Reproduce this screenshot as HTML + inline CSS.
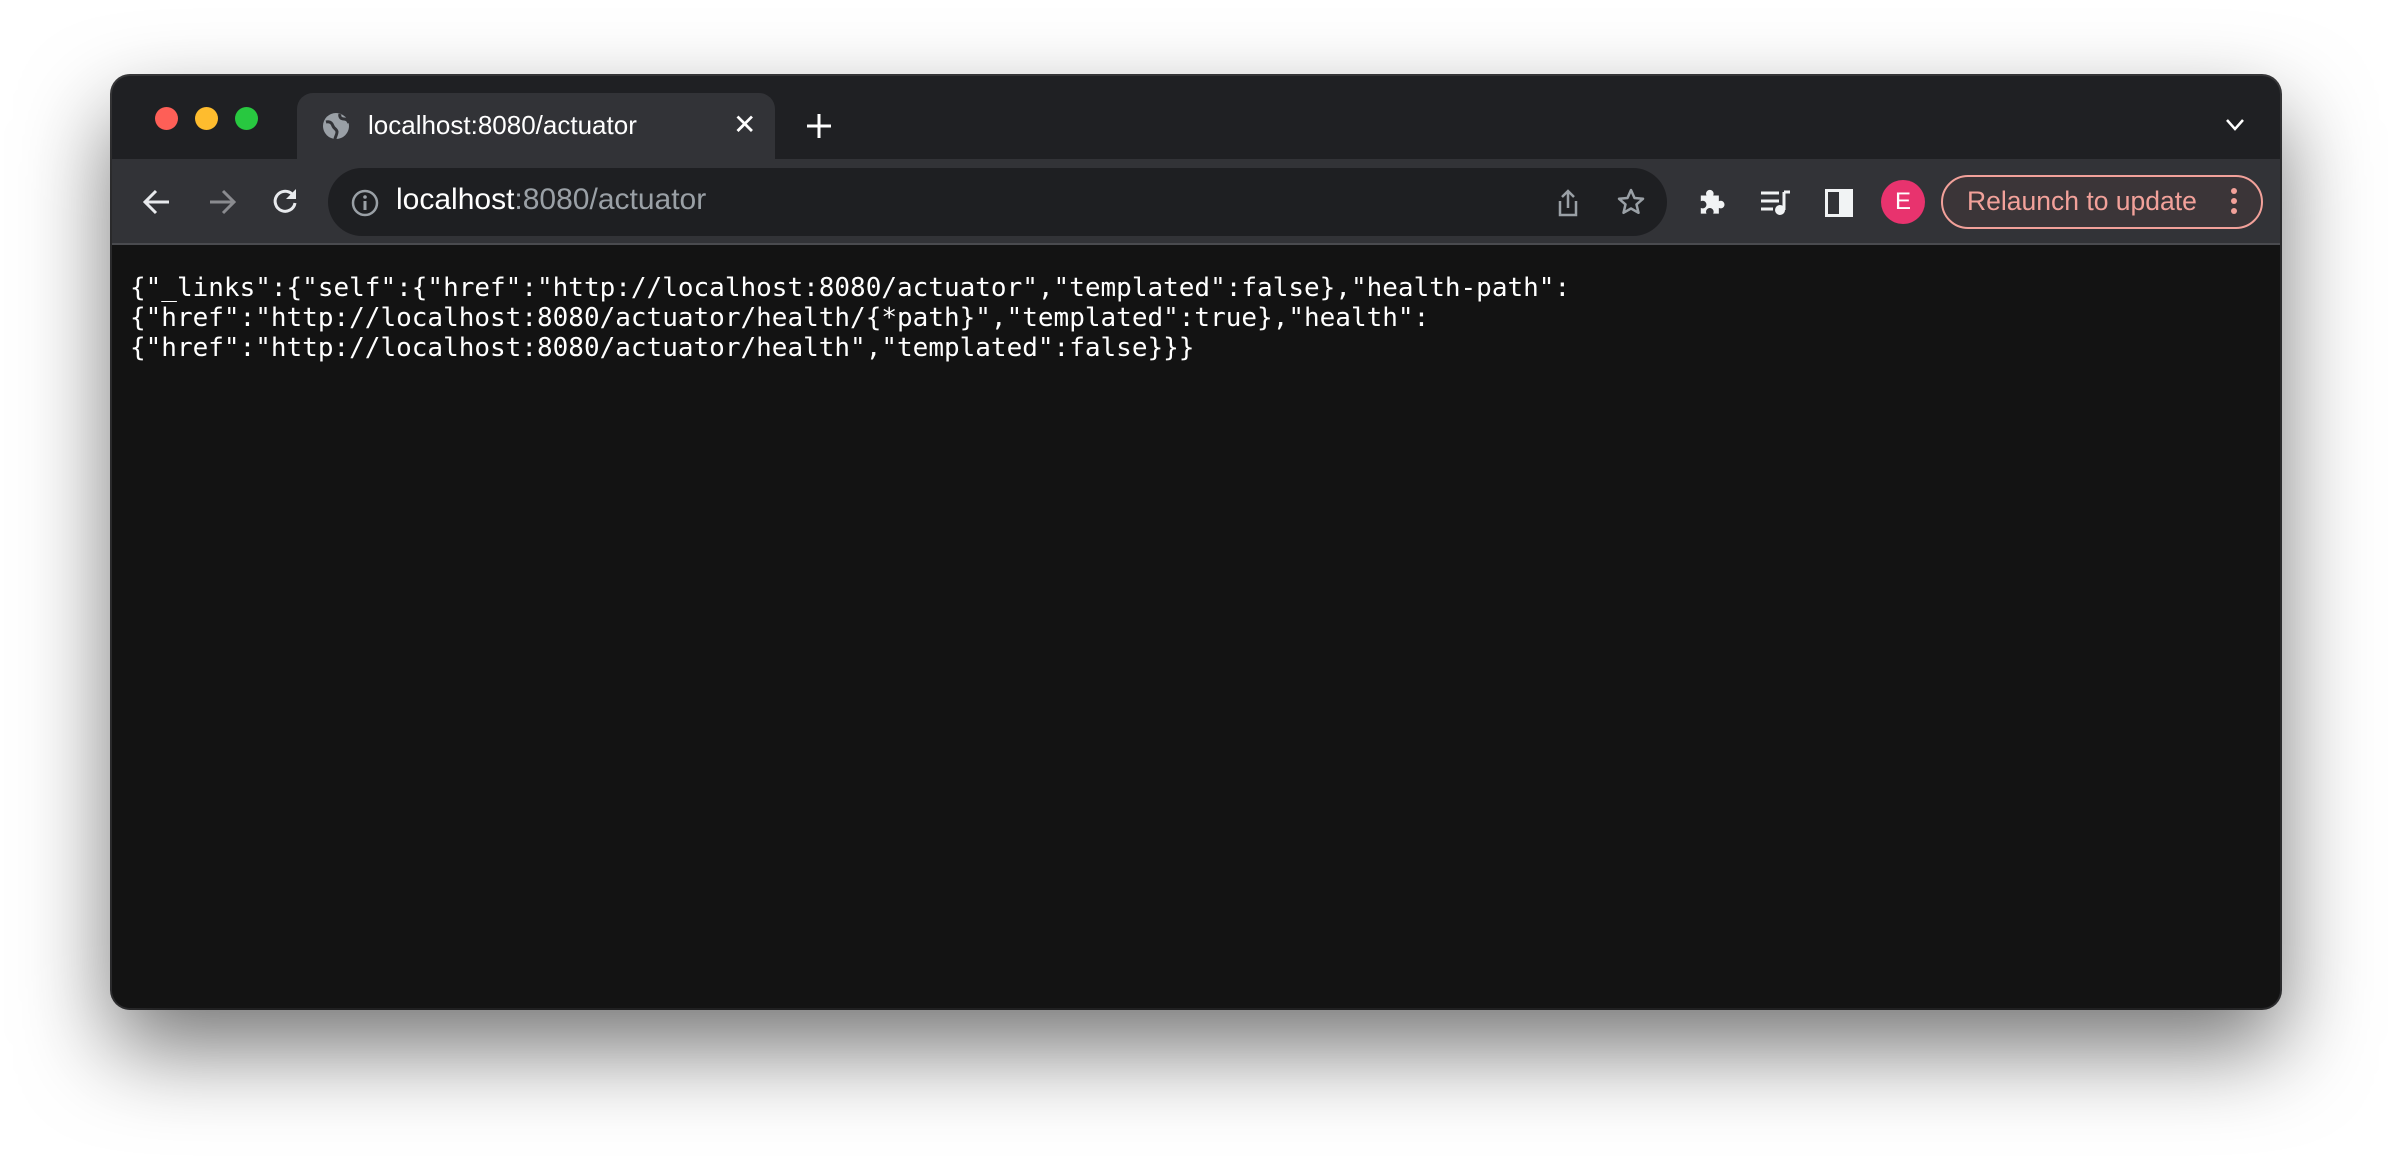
<!DOCTYPE html>
<html><head><meta charset="utf-8"><style>
html,body{margin:0;padding:0;background:#fff;width:2392px;height:1156px;overflow:hidden;position:relative;font-family:"Liberation Sans",sans-serif}
.win{position:absolute;left:112px;top:76px;width:2168px;height:932px;border-radius:18px;background:#1f2023;box-shadow:0 40px 90px rgba(0,0,0,.55),0 0 0 2px #3a3a3c;overflow:hidden}
.dot{position:absolute;top:107px;width:23px;height:23px;border-radius:50%}
.tab{position:absolute;left:185px;top:17px;width:478px;height:68px;background:#323337;border-radius:16px 16px 0 0}
.toolbar{position:absolute;left:0;top:83px;width:2168px;height:84px;background:#323337;border-bottom:2px solid #4a4b4f}
.omni{position:absolute;left:216px;top:9px;width:1339px;height:68px;border-radius:34px;background:#1e1f22}
.content{position:absolute;left:0;top:169px;width:2168px;height:763px;background:#131313}
pre{margin:0;position:absolute;left:18px;top:28px;font-family:"DejaVu Sans Mono","Liberation Mono",monospace;font-size:26px;line-height:30px;color:#fff}
svg{position:absolute}
</style></head><body>
<div class="win">
 <div class="dot" style="left:43px;top:31px;background:#fe5f57"></div>
 <div class="dot" style="left:83px;top:31px;background:#febc2e"></div>
 <div class="dot" style="left:123px;top:31px;background:#28c840"></div>
 <div class="tab"></div>
 <svg style="left:210px;top:36px" width="28" height="28" viewBox="0 0 28 28"><circle cx="14" cy="14" r="13" fill="#9aa0a6"/><path d="M4 10c4-1 6 1 7 4s4 3 4 6-2 5-2 7M18 2c-1 3 1 5 4 5s4 2 5 4" stroke="#323337" stroke-width="3" fill="none"/></svg>
 <div style="position:absolute;left:256px;top:34px;color:#fff;font-size:26px">localhost:8080/actuator</div>
 <div style="position:absolute;left:621px;top:32px;color:#fff;font-size:28px">✕</div>
 <svg style="left:693px;top:36px" width="28" height="28"><path d="M14 2v24M2 14h24" stroke="#fff" stroke-width="3"/></svg>
 <svg style="left:2113px;top:42px" width="20" height="14"><path d="M2 2l8 9 8-9" stroke="#fff" stroke-width="2.5" fill="none"/></svg>
 <div class="toolbar">
  <svg style="left:30px;top:28px" width="30" height="30"><path d="M27 15H4M14 4L3 15l11 11" stroke="#e8eaed" stroke-width="3" fill="none"/></svg>
  <svg style="left:95px;top:28px" width="30" height="30"><path d="M3 15h23M16 4l11 11-11 11" stroke="#8a8b8f" stroke-width="3" fill="none"/></svg>
  <svg style="left:158px;top:27px" width="32" height="32"><path d="M25 17a10 10 0 1 1-3-9" stroke="#e8eaed" stroke-width="3" fill="none"/><path d="M26 3v10H16z" fill="#e8eaed"/></svg>
  <div class="omni">
   <svg style="left:23px;top:21px" width="28" height="28"><circle cx="14" cy="14" r="12" stroke="#9aa0a6" stroke-width="2.5" fill="none"/><path d="M14 12v9" stroke="#9aa0a6" stroke-width="3"/><circle cx="14" cy="8" r="1.8" fill="#9aa0a6"/></svg>
   <div style="position:absolute;left:68px;top:15px;font-size:30px;color:#fff">localhost<span style="color:#9aa0a6">:8080/actuator</span></div>
   <svg style="left:1228px;top:20px" width="24" height="30"><path d="M12 20V3M6 9l6-6 6 6M4 13v14h16V13" stroke="#9aa0a6" stroke-width="2.5" fill="none"/></svg>
   <svg style="left:1288px;top:19px" width="30" height="30"><path d="M15 3l3.5 8 8.5.8-6.5 5.6 2 8.4L15 21.5 7.5 25.8l2-8.4L3 11.8l8.5-.8z" stroke="#9aa0a6" stroke-width="2.5" fill="none" stroke-linejoin="round"/></svg>
  </div>
  <svg style="left:1585px;top:28px" width="30" height="30"><path d="M4 9h6a4 4 0 1 1 7 0h6v6a4 4 0 1 1 0 7v6h-6a4 4 0 1 0-7 0H4v-6a4 4 0 1 0 0-7z" fill="#f1f3f4" transform="scale(.95)"/></svg>
  <svg style="left:1648px;top:30px" width="32" height="28"><path d="M1 4h18M1 12h18M1 20h12" stroke="#f1f3f4" stroke-width="3"/><path d="M24 3v18" stroke="#f1f3f4" stroke-width="3"/><path d="M24 3h6" stroke="#f1f3f4" stroke-width="3"/><circle cx="20" cy="21" r="5" fill="#f1f3f4"/></svg>
  <svg style="left:1713px;top:30px" width="28" height="28"><rect x="1.5" y="1.5" width="25" height="25" fill="none" stroke="#f1f3f4" stroke-width="3"/><rect x="14" y="1" width="13" height="26" fill="#f1f3f4"/></svg>
  <div style="position:absolute;left:1769px;top:21px;width:44px;height:44px;border-radius:50%;background:#e8336e;color:#fff;font-size:24px;text-align:center;line-height:44px">E</div>
  <div style="position:absolute;left:1829px;top:16px;width:318px;height:50px;border:2px solid #f2a19a;border-radius:28px;background:#3b3538"></div>
  <div style="position:absolute;left:1855px;top:27px;color:#f2a19a;font-size:26.5px">Relaunch to update</div>
  <svg style="left:2117px;top:27px" width="10" height="32"><circle cx="5" cy="5" r="3" fill="#f2a19a"/><circle cx="5" cy="15" r="3" fill="#f2a19a"/><circle cx="5" cy="25" r="3" fill="#f2a19a"/></svg>
 </div>
 <div class="content"><pre>{"_links":{"self":{"href":"http://localhost:8080/actuator","templated":false},"health-path":
{"href":"http://localhost:8080/actuator/health/{*path}","templated":true},"health":
{"href":"http://localhost:8080/actuator/health","templated":false}}}</pre></div>
</div>
</body></html>
